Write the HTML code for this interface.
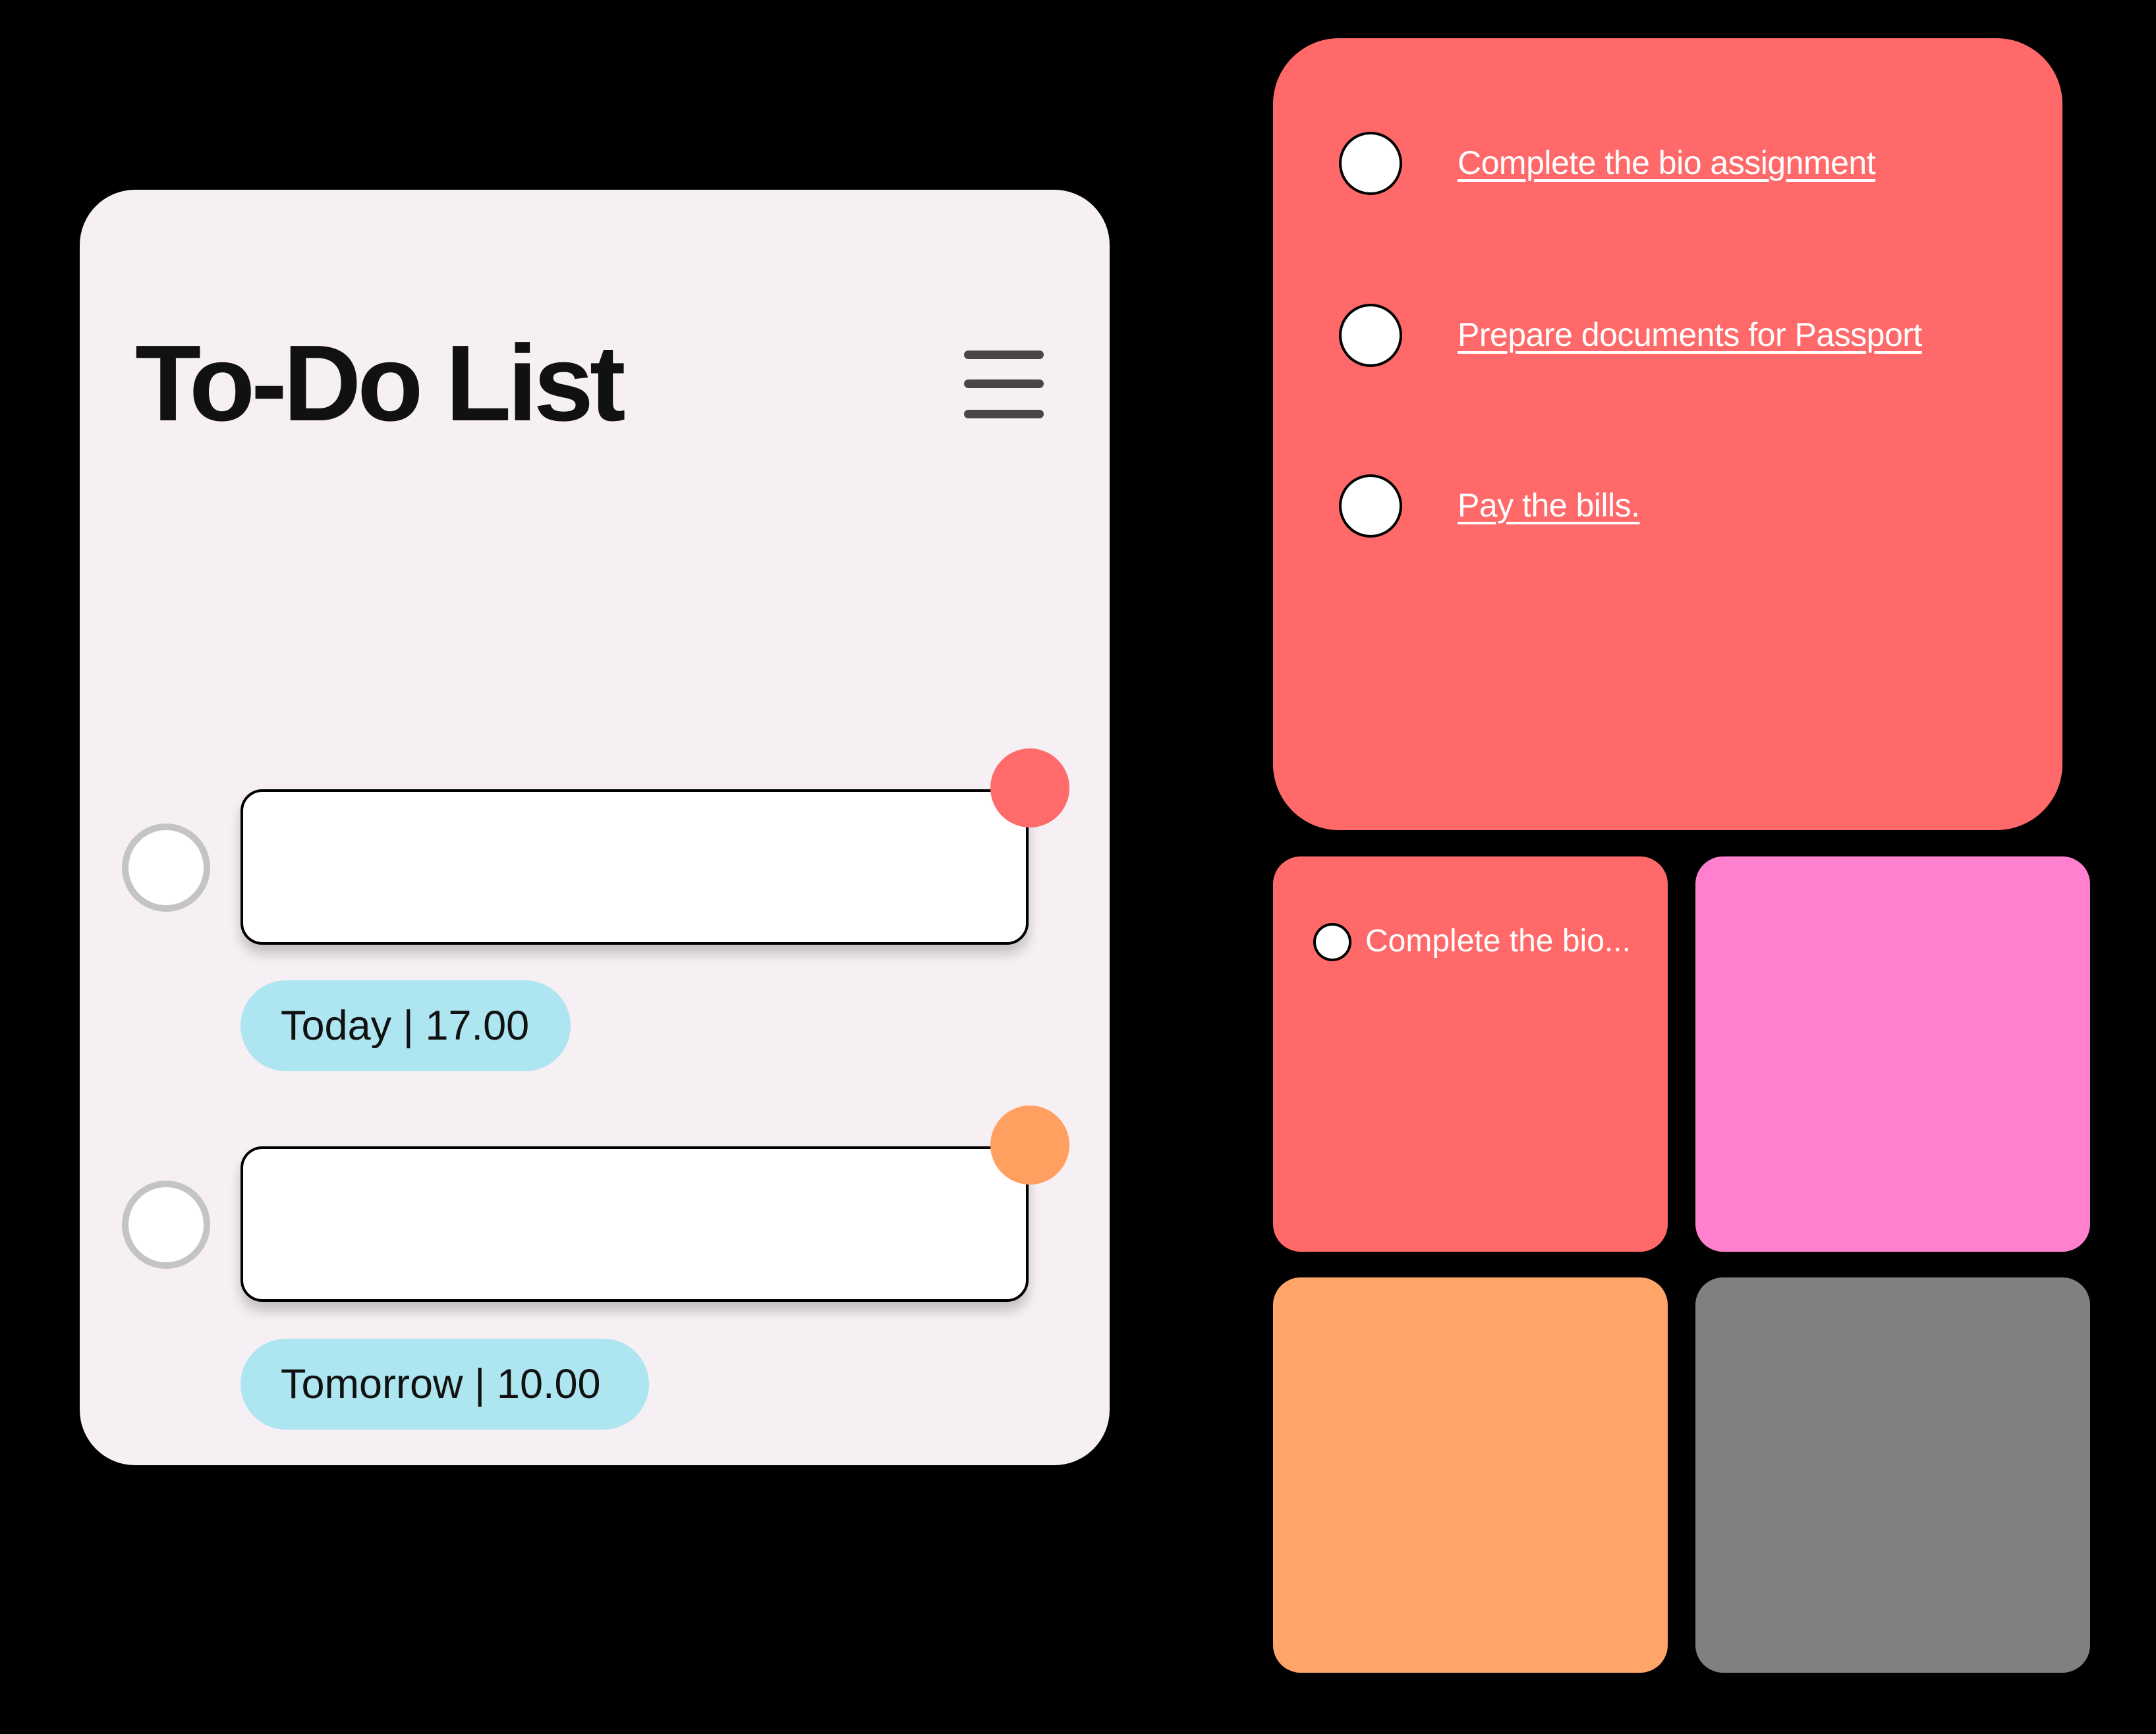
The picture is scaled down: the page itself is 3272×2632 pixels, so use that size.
<!DOCTYPE html>
<html><head><meta charset="utf-8"><style>
*{margin:0;padding:0;box-sizing:border-box}
body{width:3272px;height:2632px;background:#000;position:relative;overflow:hidden;font-family:"Liberation Sans",sans-serif}
.a{position:absolute}
.card{left:121px;top:288px;width:1563px;height:1936px;background:#f6f0f4;border-radius:84px}
.title{left:205px;top:500px;font-size:164px;font-weight:bold;color:#111;letter-spacing:-6px;line-height:1}
.bar{left:1463px;width:121px;height:13px;border-radius:7px;background:#4a4548}
.radio{width:134px;height:134px;border-radius:50%;border:10px solid #c4c4c4;background:#fff}
.inp{left:365px;width:1196px;height:236px;background:#fff;border:4px solid #000;border-radius:33px;box-shadow:0 14px 18px rgba(0,0,0,.2)}
.dot{width:120px;height:120px;border-radius:50%}
.chip{left:365px;height:138px;border-radius:69px;background:#ade5f0;font-size:63px;color:#111;line-height:138px;padding-left:61px}
.big{left:1932px;top:58px;width:1198px;height:1202px;background:#ff6969;border-radius:100px}
.c{width:96px;height:96px;border-radius:50%;background:#fff;border:4px solid #000}
.t{color:#fff;font-size:50px;letter-spacing:-0.5px;text-decoration:underline;text-decoration-thickness:4px;text-underline-offset:8px;line-height:1}
.tile{width:599px;height:600px;border-radius:42px}
</style></head><body>
<div class="a card"></div>
<div class="a title">To-Do List</div>
<div class="a bar" style="top:532px"></div>
<div class="a bar" style="top:576px"></div>
<div class="a bar" style="top:622px"></div>

<div class="a radio" style="left:185px;top:1250px"></div>
<div class="a inp" style="top:1198px"></div>
<div class="a dot" style="left:1503px;top:1136px;background:#ff6b6b"></div>
<div class="a chip" style="top:1488px;width:501px">Today | 17.00</div>

<div class="a radio" style="left:185px;top:1792px"></div>
<div class="a inp" style="top:1740px"></div>
<div class="a dot" style="left:1503px;top:1678px;background:#ffa061"></div>
<div class="a chip" style="top:2032px;width:620px">Tomorrow | 10.00</div>

<div class="a big"></div>
<div class="a c" style="left:2032px;top:200px"></div>
<div class="a t" style="left:2212px;top:222px">Complete the bio assignment</div>
<div class="a c" style="left:2032px;top:461px"></div>
<div class="a t" style="left:2212px;top:483px">Prepare documents for Passport</div>
<div class="a c" style="left:2032px;top:720px"></div>
<div class="a t" style="left:2212px;top:742px">Pay the bills.</div>

<div class="a tile" style="left:1932px;top:1300px;background:#ff6969"></div>
<div class="a tile" style="left:2573px;top:1300px;background:#ff80cf"></div>
<div class="a tile" style="left:1932px;top:1939px;background:#ffa56a"></div>
<div class="a tile" style="left:2573px;top:1939px;background:#808080"></div>
<div class="a" style="left:1993px;top:1401px;width:58px;height:58px;border-radius:50%;background:#fff;border:4px solid #000"></div>
<div class="a" style="left:2072px;top:1405px;color:#fff;font-size:48px;line-height:1">Complete the bio...</div>
</body></html>
